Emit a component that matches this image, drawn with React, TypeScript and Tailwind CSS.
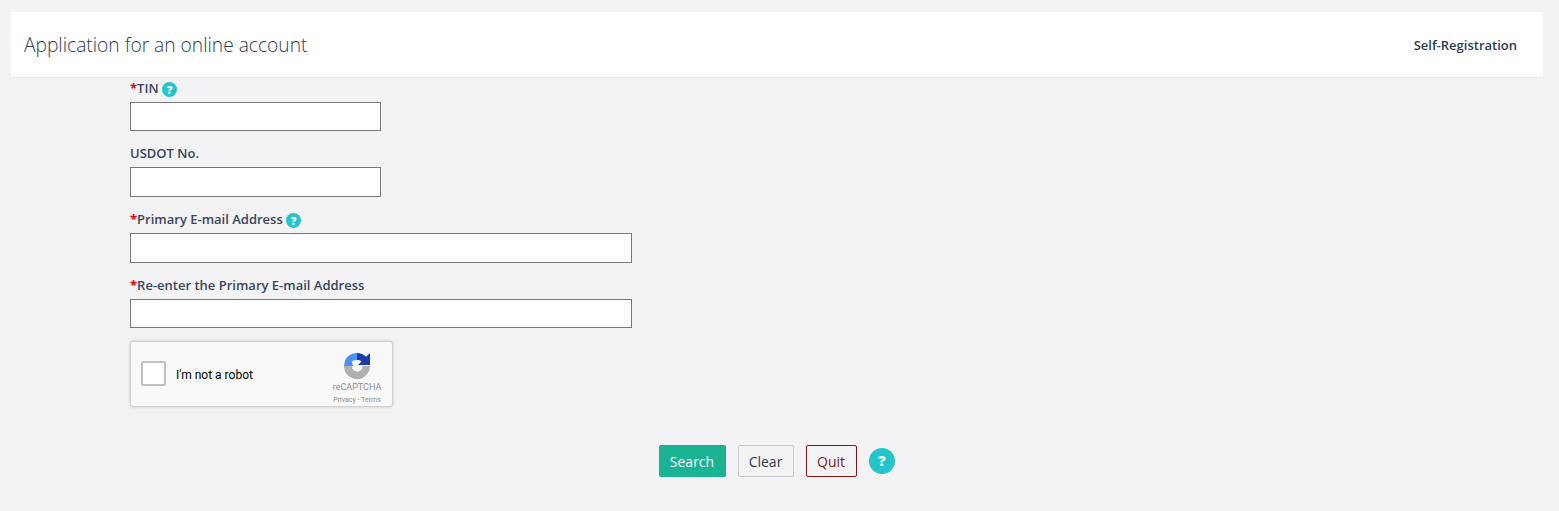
import React from "react";

function Help({ size = 15, fs = 12, y = 12.5 }: { size?: number; fs?: number; y?: number }) {
  return (
    <svg width={size} height={size} viewBox="0 0 16 16" className="shrink-0">
      <circle cx="8" cy="8" r="8" fill="#23c6c8" />
      <text x="8" y={y} textAnchor="middle" fontSize={fs} fontWeight="800" fill="#fff" fontFamily="'Open Sans', sans-serif">?</text>
    </svg>
  );
}

function Field({ label, req, help, wide, h = "h-[30px]" }: { label: string; req?: boolean; help?: boolean; wide?: boolean; h?: string }) {
  return (
    <div className="flex flex-col">
      <div className="flex h-[22px] items-center gap-[3px] text-[13px] font-semibold text-[#3a465c]">
        <span>
          {req && <span className="text-[#e60000] font-bold">*</span>}
          {label}
        </span>
        {help && <Help />}
      </div>
      <input className={`${wide ? "w-[502px]" : "w-[251px]"} ${h} mt-[2px] border border-[#777777] bg-white`} />
    </div>
  );
}

function RecaptchaLogo() {
  return (
    <svg width="28" height="28" viewBox="0 0 28 28">
      <path d="M14 1a13 13 0 0 1 9.2 3.8L27 1v12H15l3.6-3.6A6 6 0 0 0 14 8z" fill="#1c3aa9" />
      <path d="M14 1A13 13 0 0 0 2 9L1 14h9.5l-1-1.5-.6-3A6 6 0 0 1 14 8z" fill="#4a90f5" />
      <path d="M1 14h7.8a5.6 5.6 0 0 0 9.6 3.8l4.8 5.4A13 13 0 0 1 1 14z" fill="#b0b0b0" />
      <path d="M27 14a13 13 0 0 1-3.8 9.2l-4.8-5.4A5.6 5.6 0 0 0 19.6 14z" fill="#b0b0b0" />
    </svg>
  );
}

export default function App() {
  return (
    <div className="min-h-[511px] bg-[#f3f3f5] pt-[12px] font-['Open_Sans',sans-serif]">
      <header className="mx-[11px] mr-[16px] flex h-[66px] items-center justify-between border-b border-[#e7eaec] bg-white pl-[13px] pr-[26px] pt-[2px]">
        <h1 className="text-[19.2px] font-light text-[#2f3b52]">Application for an online account</h1>
        <span className="pt-[1px] text-[13px] font-semibold text-[#2f3b52]">Self-Registration</span>
      </header>
      <main className="pl-[130px]">
        <div className="flex flex-col gap-[12px]">
          <Field label="TIN" req help h="h-[29px]" />
          <Field label="USDOT No." />
          <Field label="Primary E-mail Address" req help wide />
          <Field label="Re-enter the Primary E-mail Address" req wide h="h-[29px]" />
        </div>
        <div className="mt-[13px] flex h-[66px] w-[263px] items-center rounded-[3px] border border-[#d3d3d3] bg-[#f9f9f9] shadow-[0_0_3px_rgba(0,0,0,0.2)] font-['Roboto',sans-serif]">
          <div className="mb-[1px] ml-[10px] h-[25px] w-[25px] rounded-[2px] border-2 border-[#c1c1c1] bg-white" />
          <span className="ml-[10px] mt-[1px] text-[12px] text-black">I'm not a robot</span>
          <div className="ml-auto mr-[10px] flex w-[50px] flex-col items-center pt-[8px]">
            <RecaptchaLogo />
            <span className="mt-[2px] text-[9px] leading-[11px] text-[#8c8c8c]">reCAPTCHA</span>
            <span className="mt-[3px] text-[7px] leading-[9px] text-[#8c8c8c]">Privacy - Terms</span>
          </div>
        </div>
      </main>
      <div className="mt-[38px] flex items-center justify-center gap-[12px] pr-[6px] text-[14px]">
        <button className="h-[32px] w-[67px] rounded-[2px] bg-[#1ab394] text-white">Search</button>
        <button className="h-[32px] w-[56px] rounded-[2px] border border-[#c8c8cc] text-[#2f3b52]">Clear</button>
        <button className="h-[32px] w-[51px] rounded-[2px] border border-[#7a1a12] text-[#7a1a12]">Quit</button>
        <Help size={26} fs={9} y={11} />
      </div>
    </div>
  );
}
